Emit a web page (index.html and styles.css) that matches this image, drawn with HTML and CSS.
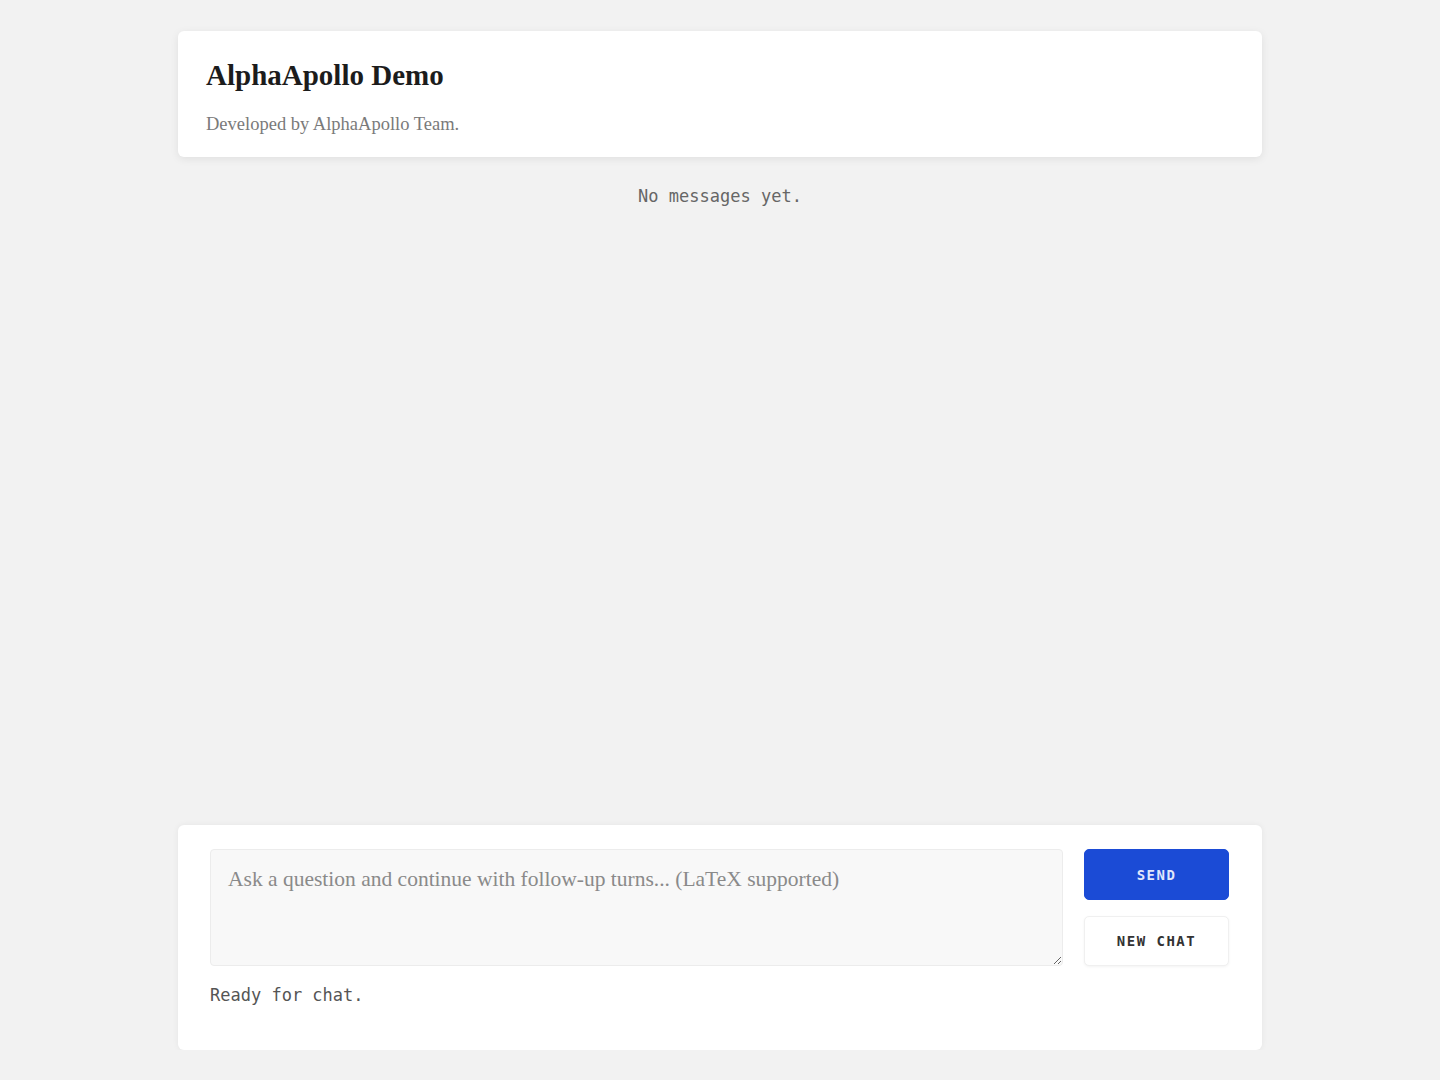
FILE: index.html
```html
<!DOCTYPE html>
<html lang="en">
<head>
    <meta charset="UTF-8">
    <meta name="viewport" content="width=device-width, initial-scale=1.0">
    <title>AlphaApollo Demo</title>
    <link rel="stylesheet" href="styles.css">
</head>
<body>
    <div class="app">
        <header class="top-card">
            <h1 class="title">AlphaApollo Demo</h1>
            <p class="subtitle">Developed by AlphaApollo Team.</p>
        </header>

        <div id="messages" class="messages">
            <p class="empty">No messages yet.</p>
        </div>

        <div class="composer">
            <div class="composer-row">
                <textarea class="prompt" placeholder="Ask a question and continue with follow-up turns... (LaTeX supported)"></textarea>
                <div class="actions">
                    <button class="btn btn-send">SEND</button>
                    <button class="btn btn-new">NEW CHAT</button>
                </div>
            </div>
            <p class="status">Ready for chat.</p>
        </div>
    </div>
</body>
</html>
```

FILE: styles.css
```css
body{
    background-color: #f2f2f2;
    margin: 0;
    padding: 0;
    font-family: "Liberation Serif", "DejaVu Serif", serif;
}
.app{
    width: 1084px;
    margin: 0 auto;
    padding-top: 31px;
    height: 1050px;
    box-sizing: border-box;
    display: flex;
    flex-direction: column;
}
.top-card{
    background-color: #fff;
    border-radius: 6px;
    box-shadow: 0 2px 8px rgba(0,0,0,0.08);
    padding: 24px 28px 22px;
    height: 126px;
    box-sizing: border-box;
}
.title{
    margin: 0;
    font-size: 29px;
    font-weight: bold;
    color: #1c1c1c;
    line-height: 40px;
}
.subtitle{
    margin: 18px 0 0;
    font-size: 18.5px;
    line-height: 22px;
    color: #7a7a7a;
}
.messages{
    flex: 1;
    padding-top: 29px;
}
.empty{
    margin: 0;
    text-align: center;
    font-family: "DejaVu Sans Mono", "Liberation Mono", monospace;
    font-size: 17px;
    color: #666;
}
.composer{
    background-color: #fff;
    border-radius: 6px;
    box-shadow: 0 0 6px rgba(0,0,0,0.06);
    padding: 24px 33px 0 32px;
    height: 225px;
    box-sizing: border-box;
}
.composer-row{
    display: flex;
    gap: 21px;
}
.prompt{
    flex: 1;
    height: 117px;
    box-sizing: border-box;
    background-color: #f8f8f8;
    border: 1px solid #ececec;
    border-radius: 4px;
    padding: 17px 17px;
    font-family: "Liberation Serif", "DejaVu Serif", serif;
    font-size: 21.5px;
    color: #333;
    resize: vertical;
}
.prompt::placeholder{
    color: #8a8a8a;
}
.actions{
    width: 145px;
    display: flex;
    flex-direction: column;
    gap: 16px;
}
.btn{
    height: 51px;
    border-radius: 5px;
    font-family: "DejaVu Sans Mono", "Liberation Mono", monospace;
    font-size: 14px;
    font-weight: bold;
    letter-spacing: 1.5px;
    cursor: pointer;
}
.btn-send{
    background-color: #1b4bd6;
    color: #e0e7fb;
    border: 1px solid #1b4bd6;
}
.btn-new{
    height: 50px;
    background-color: #fff;
    color: #333;
    border: 1px solid #f0f0f0;
    box-shadow: 0 1px 3px rgba(0,0,0,0.05);
}
.status{
    margin: 19px 0 0;
    font-family: "DejaVu Sans Mono", "Liberation Mono", monospace;
    font-size: 17px;
    color: #555;
}
```
